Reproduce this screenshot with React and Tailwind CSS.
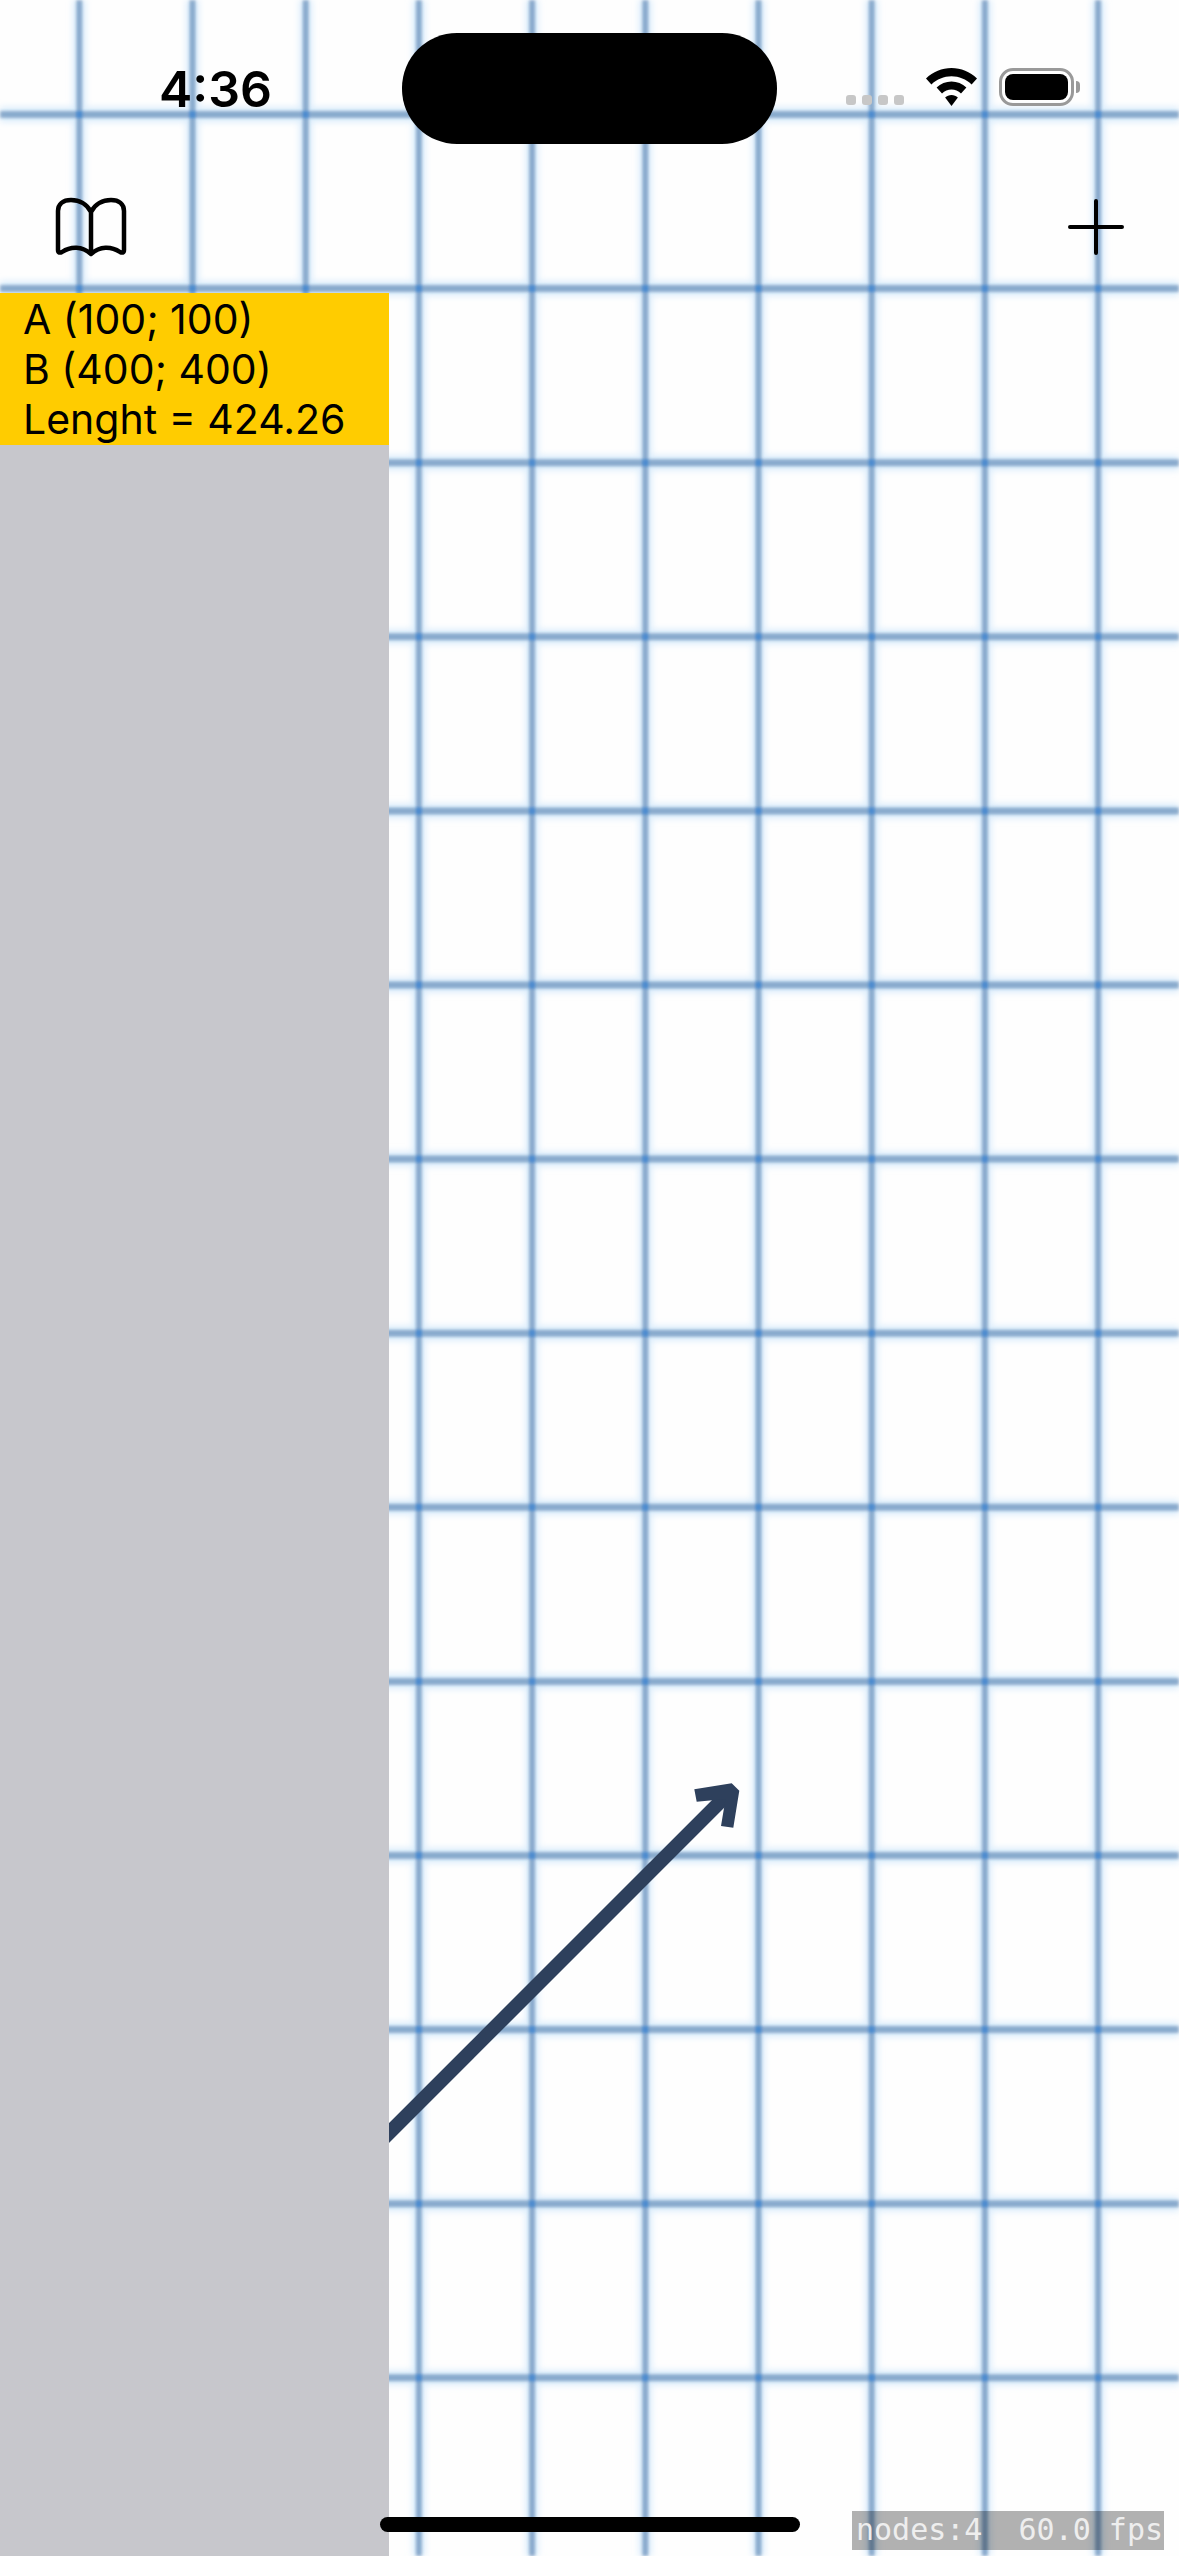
import React from 'react';

const verticals = Array.from({ length: 10 }, (_, i) => 79.3 + i * 113.2);
const horizontals = Array.from({ length: 14 }, (_, i) => 114.5 + i * 174.1);

function GridCanvas() {
  return (
    <svg className="absolute inset-0" width="1179" height="2556" viewBox="0 0 1179 2556">
      <defs>
        <filter id="soft" x="-5%" y="-5%" width="110%" height="110%">
          <feGaussianBlur stdDeviation="1.5" />
        </filter>
        <filter id="halo" x="-5%" y="-5%" width="110%" height="110%">
          <feGaussianBlur stdDeviation="3" />
        </filter>
      </defs>
      <g filter="url(#halo)" stroke="#dcedfc">
        {verticals.map((x) => <line key={x} x1={x} y1="0" x2={x} y2="2556" strokeWidth="13" />)}
        {horizontals.map((y) => <line key={y} x1="0" y1={y} x2="1179" y2={y} strokeWidth="15" />)}
      </g>
      <g filter="url(#soft)">
        <g stroke="#2b5f9a" strokeOpacity="0.47">
          {verticals.map((x) => <line key={x} x1={x} y1="0" x2={x} y2="2556" strokeWidth="6" />)}
          {horizontals.map((y) => <line key={y} x1="0" y1={y} x2="1179" y2={y} strokeWidth="7" />)}
        </g>
        <g fill="#3f8ddf" fillOpacity="0.6">
          {verticals.map((x) =>
            horizontals.map((y) => <rect key={`${x}-${y}`} x={x - 3} y={y - 3.5} width="6" height="7" />)
          )}
        </g>
      </g>
      {/* arrow */}
      <line x1="340" y1="2182" x2="728" y2="1794" stroke="#2e405c" strokeWidth="14" />
      <polygon
        points="694.3,1789.3 731.7,1783.3 739.3,1790.7 733.3,1827.7 721,1826 725.5,1799 696.7,1801.7"
        fill="#2e405c"
      />
    </svg>
  );
}

function Wifi() {
  return (
    <svg width="51" height="38" viewBox="0 0 51 38" fill="#000">
      <path d="M25.5 0C35 0 44 3.8 51 10.5L45.6 16.4C40.2 11.2 33 8.2 25.5 8.2S10.8 11.2 5.4 16.4L0 10.5C7 3.8 16 0 25.5 0Z" />
      <path d="M25.5 13.5C31 13.5 36.4 15.7 40.4 19.6L35 25.4C32.4 22.9 29 21.6 25.5 21.6S18.6 22.9 16 25.4L10.6 19.6C14.6 15.7 20 13.5 25.5 13.5Z" />
      <path d="M25.5 27C27.9 27 30.2 27.9 31.9 29.6L25.5 38L19.1 29.6C20.8 27.9 23.1 27 25.5 27Z" />
    </svg>
  );
}

function Battery() {
  return (
    <div className="flex items-center">
      <div className="flex h-[38px] w-[75px] items-center justify-center rounded-[14px] border-[3px] border-[#999999]">
        <div className="h-[26px] w-[63px] rounded-[8px] bg-black" />
      </div>
      <div className="ml-[2px] h-[12px] w-[4px] rounded-r-full bg-[#999999]" />
    </div>
  );
}

function Book() {
  return (
    <svg width="74" height="62" viewBox="0 0 74 62" fill="none" stroke="#000" strokeWidth="4.5" strokeLinecap="round" strokeLinejoin="round">
      <path d="M37 16C33 8 25 4 17 4C9 4 4 8 4 15V54C4 57 6 57 8 56C17 50 28 50 37 58C46 50 57 50 66 56C68 57 70 57 70 54V15C70 8 65 4 57 4C49 4 41 8 37 16V58" />
    </svg>
  );
}

function Plus() {
  return (
    <svg width="60" height="60" viewBox="0 0 60 60" stroke="#000" strokeWidth="4" strokeLinecap="round">
      <path d="M30 4V56M4 30H56" />
    </svg>
  );
}

export default function App() {
  return (
    <div className="relative flex h-[2556px] w-[1179px] flex-col overflow-hidden bg-[#fefefe] font-['Inter',sans-serif] text-black">
      <GridCanvas />

      {/* status bar */}
      <div className="relative flex h-[176px] items-start pt-[33px]">
        <div className="ml-[159px] mt-[26px] w-[243px] text-[50px] font-semibold leading-[60px]">4:36</div>
        <div className="h-[111px] w-[375px] rounded-[55px] bg-black" />
        <div className="ml-[69px] mt-[62px] flex gap-[6px]">
          <div className="h-[10px] w-[10px] rounded-[3px] bg-[#c7c7c7]" />
          <div className="h-[10px] w-[10px] rounded-[3px] bg-[#c7c7c7]" />
          <div className="h-[10px] w-[10px] rounded-[3px] bg-[#c7c7c7]" />
          <div className="h-[10px] w-[10px] rounded-[3px] bg-[#c7c7c7]" />
        </div>
        <div className="ml-[22px] mt-[35px]"><Wifi /></div>
        <div className="ml-[22px] mt-[35px]"><Battery /></div>
      </div>

      {/* nav bar */}
      <div className="relative flex h-[117px] items-center justify-between pb-[15px] pl-[54px] pr-[53px]">
        <Book />
        <Plus />
      </div>

      {/* side panel */}
      <div className="relative flex w-[389px] flex-1 flex-col bg-[#c7c7cc]">
        <div className="bg-[#ffcc00] py-px pl-[23px] text-[41px] leading-[50px]">
          <div>A (100; 100)</div>
          <div>B (400; 400)</div>
          <div>Lenght = 424.26</div>
        </div>
      </div>

      {/* home indicator */}
      <div className="absolute left-[380px] top-[2517px] h-[15px] w-[420px] rounded-full bg-black" />

      {/* debug label */}
      <div className="absolute left-[852px] top-[2511px] h-[39px] w-[312px] whitespace-pre bg-black/30 pl-[4px] font-['DejaVu_Sans_Mono',monospace] text-[30px] leading-[37px] text-[#eeeeee]">
        nodes:4  60.0 fps
      </div>
    </div>
  );
}
